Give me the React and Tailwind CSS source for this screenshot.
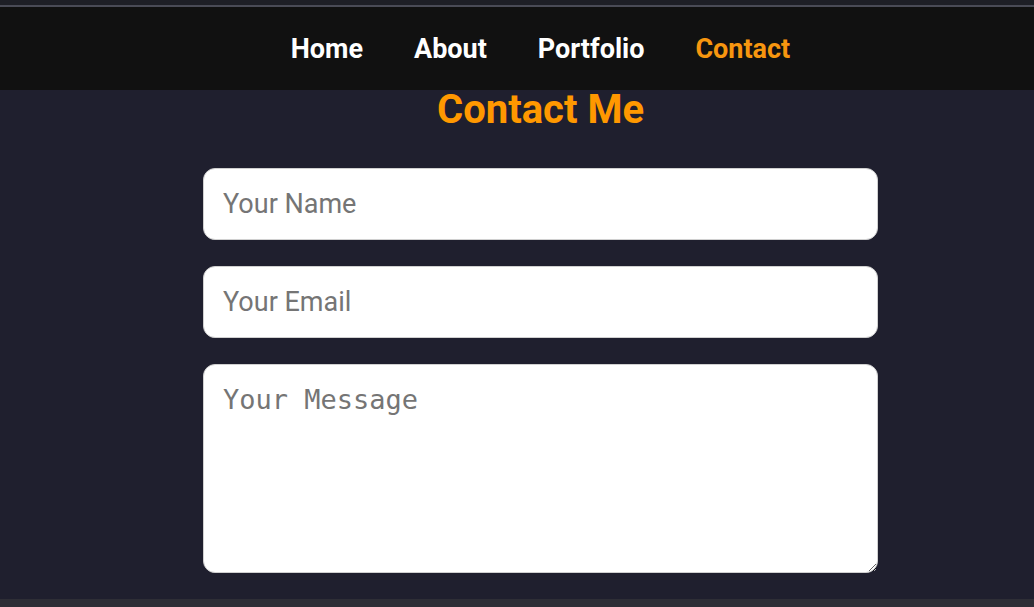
import React from 'react';

const links = ['Home', 'About', 'Portfolio', 'Contact'];

const App = () => {
  return (
    <div className="w-[1034px] h-[607px] overflow-hidden bg-[#1f1f2e]" style={{ fontFamily: 'Roboto, "Liberation Sans", sans-serif' }}>
      <div className="h-[5px] bg-[#1e1f26]"></div>
      <div className="h-[2px] bg-[#4a4b56]"></div>
      <nav className="h-[83px] bg-[#111111] flex items-center justify-center pl-[47px] pt-[2px]">
        <ul className="flex gap-[51px]">
          {links.map((l) => (
            <li key={l} className={`text-[27px] font-bold ${l === 'Contact' ? 'text-[#f7960f]' : 'text-white'}`}>{l}</li>
          ))}
        </ul>
      </nav>
      <main className="h-[509px] flex flex-col items-center pl-[47px]">
        <h2 className="text-[40px] leading-none font-bold text-[#ff9800] h-[40px]">Contact Me</h2>
        <form className="mt-[38px] w-[675px] flex flex-col gap-[26px]">
          <input type="text" placeholder="Your Name" className="h-[72px] w-full bg-white rounded-[12px] border border-[#d0d0d0] px-[19px] text-[27px] text-black placeholder:text-[#757575] outline-none" />
          <input type="email" placeholder="Your Email" className="h-[72px] w-full bg-white rounded-[12px] border border-[#d0d0d0] px-[19px] text-[27px] text-black placeholder:text-[#757575] outline-none" />
          <textarea placeholder="Your Message" className="h-[209px] w-full bg-white rounded-[12px] border border-[#d0d0d0] px-[19px] py-[18px] text-[27px] leading-tight text-black placeholder:text-[#757575] outline-none" style={{ fontFamily: '"DejaVu Sans Mono", monospace' }}></textarea>
        </form>
      </main>
      <div className="h-[8px] bg-[#2e2e36]"></div>
    </div>
  );
};

export default App;
